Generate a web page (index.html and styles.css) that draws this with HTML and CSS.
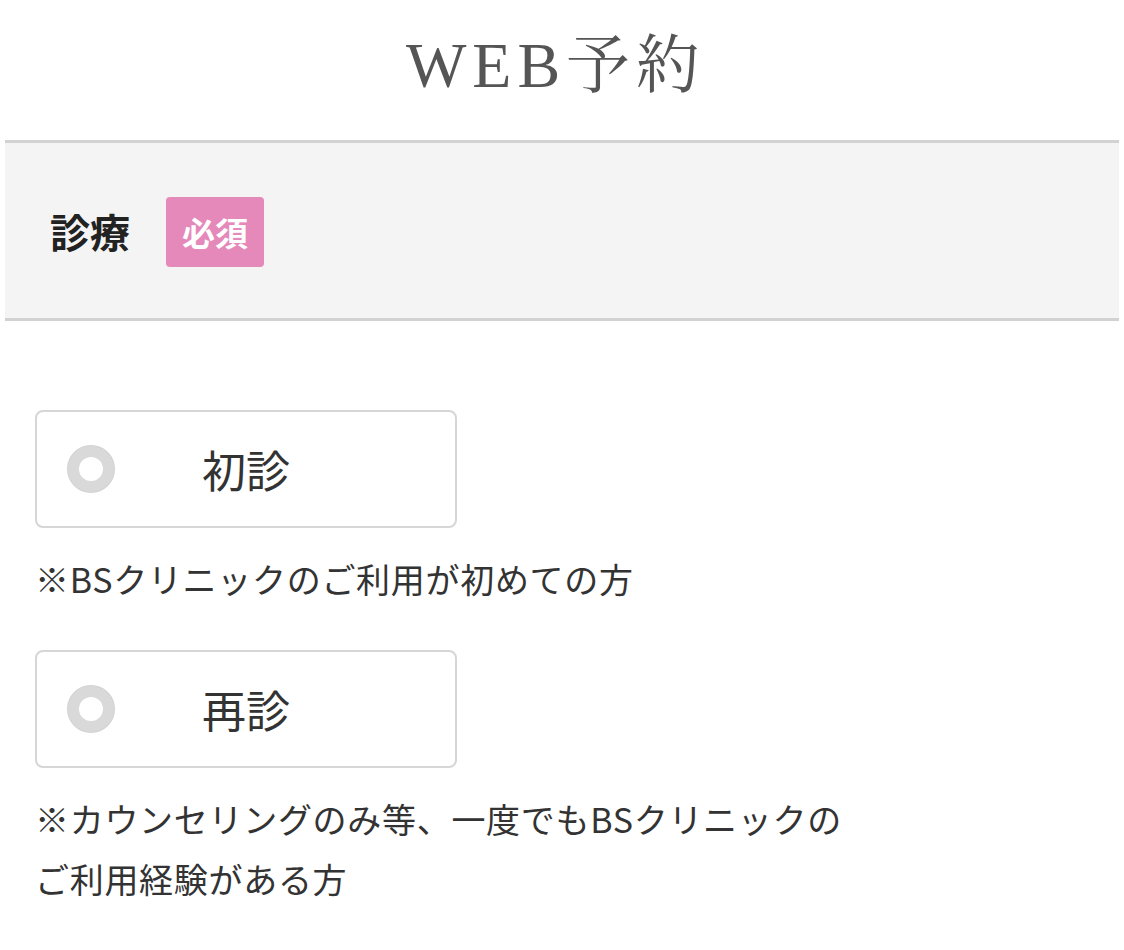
FILE: index.html
```html
<!DOCTYPE html>
<html lang="ja">
<head>
<meta charset="utf-8">
<title>WEB予約</title>
<link rel="stylesheet" href="styles.css">
</head>
<body>
<h1 class="title">WEB予約</h1>
<section class="field-head">
  <span class="field-label">診療</span>
  <span class="badge">必須</span>
</section>
<div class="options">
  <label class="option">
    <span class="radio"></span>
    <span class="option-text">初診</span>
  </label>
  <p class="note">※BSクリニックのご利用が初めての方</p>
  <label class="option">
    <span class="radio"></span>
    <span class="option-text">再診</span>
  </label>
  <p class="note">※カウンセリングのみ等、一度でもBSクリニックのご利用経験がある方</p>
</div>
</body>
</html>
```
FILE: styles.css
```css
html, body {
  margin: 0;
  padding: 0;
  background: #fff;
}
body {
  font-family: "Noto Sans CJK JP", "Noto Sans", sans-serif;
  color: #333;
}
.title {
  margin: 0;
  height: 140px;
  line-height: 132px;
  text-align: center;
  font-family: "Liberation Serif", "Noto Serif CJK JP", "Noto Sans CJK JP", serif;
  font-weight: normal;
  font-size: 64px;
  letter-spacing: 6px;
  color: #555;
  padding-right: 12px;
  box-sizing: border-box;
}
.field-head {
  margin: 0 5px;
  height: 175px;
  background: #f4f4f4;
  border-top: 3px solid #d2d2d2;
  border-bottom: 3px solid #d2d2d2;
  display: flex;
  align-items: center;
  padding-left: 45px;
  gap: 36px;
}
.field-label {
  font-size: 40px;
  font-weight: bold;
  color: #222;
  line-height: 1;
}
.badge {
  display: block;
  background: #e588ba;
  color: #fff;
  font-weight: bold;
  font-size: 33px;
  height: 70px;
  line-height: 70px;
  padding: 0 16px;
  border-radius: 4px;
  margin-top: 3px;
}
.options {
  padding: 89px 35px 0;
  display: flex;
  flex-direction: column;
  align-items: flex-start;
}
.option {
  box-sizing: border-box;
  width: 422px;
  height: 118px;
  border: 2px solid #d6d6d6;
  border-radius: 8px;
  display: grid;
  grid-template-columns: 1fr auto 1fr;
  align-items: center;
}
.radio {
  box-sizing: border-box;
  width: 46px;
  height: 46px;
  margin-left: 31px;
  border-radius: 50%;
  border: 11px solid #d9d9d9;
  background: #fff;
  box-shadow: 0 0 0 1px #d2d2d2;
}
.option-text {
  font-size: 44px;
  color: #333;
  line-height: 1;
}
.note {
  margin: 21px 0 41px;
  font-size: 34px;
  line-height: 60px;
  letter-spacing: 0.7px;
  color: #333;
  max-width: 820px;
}
```
